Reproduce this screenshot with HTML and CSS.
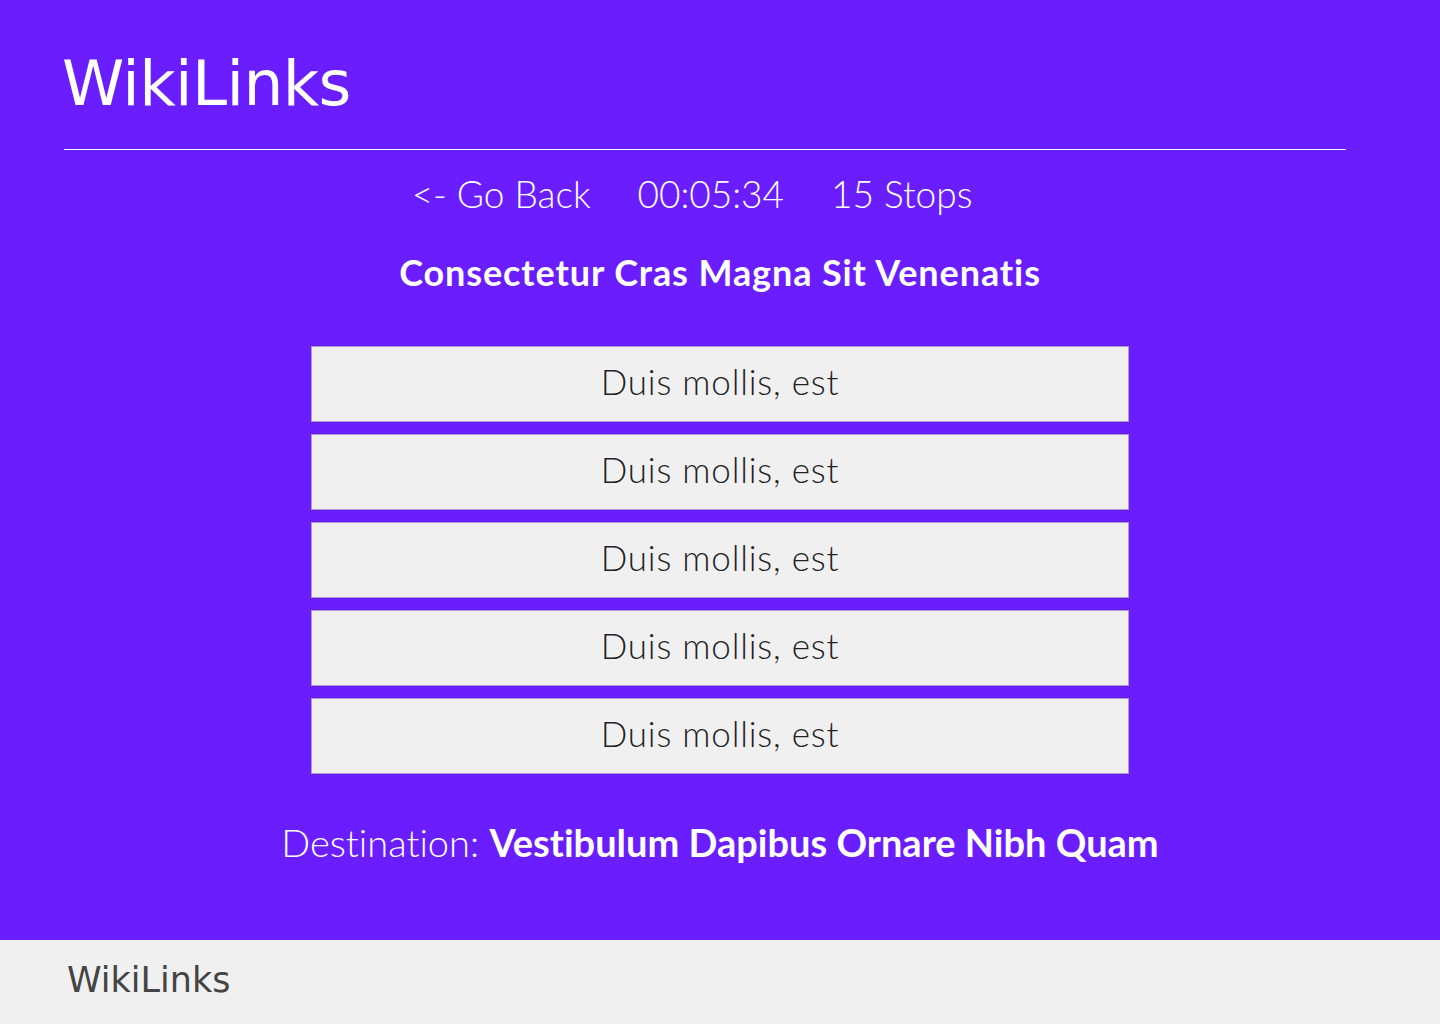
FILE: index.html
```html
<!DOCTYPE html>
<html lang="en">
<head>
<meta charset="utf-8">
<title>WikiLinks</title>
<link rel="stylesheet" href="styles.css">
</head>
<body>
<div class="page">
  <header class="top">
    <h1 class="brand">WikiLinks</h1>
    <hr class="rule">
  </header>
  <main class="game">
    <nav class="status">
      <a class="status-item" href="#">&lt;- Go Back</a>
      <span class="status-item">00:05:34</span>
      <span class="status-item">15 Stops</span>
    </nav>
    <h2 class="current">Consectetur Cras Magna Sit Venenatis</h2>
    <ul class="links">
      <li><button class="link-btn">Duis mollis, est</button></li>
      <li><button class="link-btn">Duis mollis, est</button></li>
      <li><button class="link-btn">Duis mollis, est</button></li>
      <li><button class="link-btn">Duis mollis, est</button></li>
      <li><button class="link-btn">Duis mollis, est</button></li>
    </ul>
    <p class="destination">Destination: <strong>Vestibulum Dapibus Ornare Nibh Quam</strong></p>
  </main>
  <footer class="bottom">
    <span class="foot-brand">WikiLinks</span>
  </footer>
</div>
</body>
</html>
```

FILE: styles.css
```css
* { box-sizing: border-box; }
html, body { margin: 0; padding: 0; }
body {
  background: #6a1dff;
  font-family: Lato, "Open Sans", sans-serif;
  font-variant-ligatures: none;
  color: #fff;
}
.page {
  display: flex;
  flex-direction: column;
  min-height: 1024px;
}
.top {
  padding: 0 94px 0 64px;
}
.brand {
  margin: 0 0 0 -2px;
  padding-top: 44px;
  font-family: "DejaVu Sans", sans-serif;
  font-weight: 400;
  font-size: 63px;
  line-height: 80px;
  letter-spacing: -0.6px;
  color: #fff;
}
.rule {
  margin: 25px 0 0 0;
  border: 0;
  border-top: 1px solid #fff;
  height: 0;
}
.game {
  flex: 1;
  display: flex;
  flex-direction: column;
  align-items: center;
}
.status {
  display: flex;
  gap: 47px;
  margin-top: 19px;
  padding-right: 56px;
  font-weight: 300;
  font-size: 37px;
  line-height: 50px;
}
.status-item {
  color: #fff;
  text-decoration: none;
}
.current {
  margin: 28px 0 0;
  font-size: 36px;
  letter-spacing: 0.9px;
  line-height: 50px;
  font-weight: 700;
}
.links {
  list-style: none;
  margin: 49px 0 0;
  padding: 0;
  display: flex;
  flex-direction: column;
  gap: 12px;
}
.link-btn {
  display: block;
  width: 818px;
  height: 76px;
  background: #f0f0f0;
  border: 1px solid #a99cc8;
  font-family: Lato, "Open Sans", sans-serif;
  font-variant-ligatures: none;
  font-weight: 300;
  font-size: 35px;
  letter-spacing: 0.8px;
  color: #222;
  padding: 0 0 6px;
  cursor: pointer;
}
.destination {
  margin: 43px 0 0;
  font-size: 38px;
  font-weight: 300;
  line-height: 50px;
}
.destination strong { font-weight: 700; }
.bottom {
  height: 84px;
  background: #f0f0f0;
  display: flex;
  align-items: center;
  padding-left: 67px;
  padding-bottom: 4px;
}
.foot-brand {
  font-family: "DejaVu Sans", sans-serif;
  font-size: 35px;
  color: #444;
}
```
